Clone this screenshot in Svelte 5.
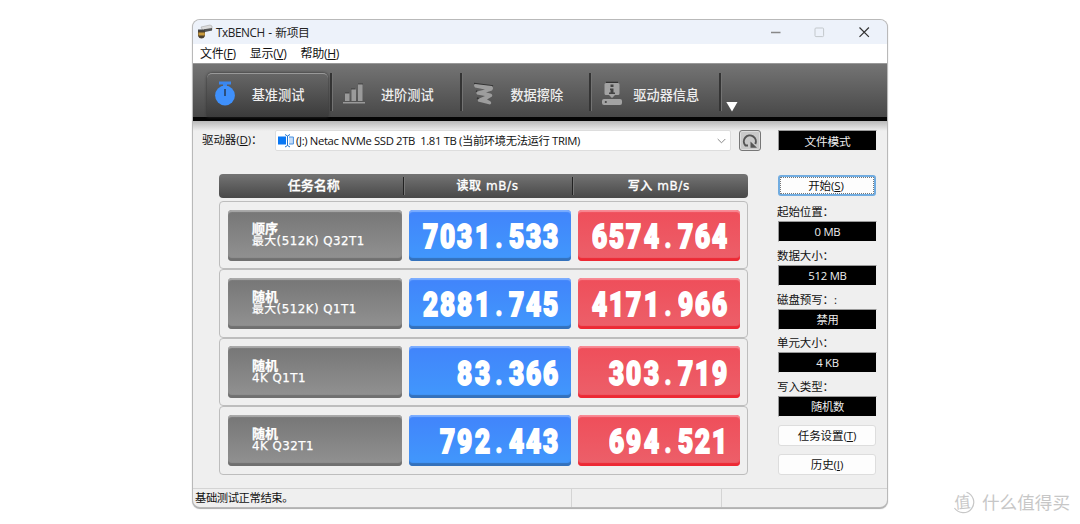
<script>
  const rows = [
    { title: '顺序', task: '最大(512K) Q32T1', read: '7031.533', write: '6574.764' },
    { title: '随机', task: '最大(512K) Q1T1', read: '2881.745', write: '4171.966' },
    { title: '随机', task: '4K Q1T1', read: '83.366', write: '303.719' },
    { title: '随机', task: '4K Q32T1', read: '792.443', write: '694.521' }
  ];
  const menus = [['文件', 'F'], ['显示', 'V'], ['帮助', 'H']];
  const fields = [
    ['起始位置：', '0 MB'],
    ['数据大小：', '512 MB'],
    ['磁盘预写：:', '禁用'],
    ['单元大小：', '4 KB'],
    ['写入类型：', '随机数']
  ];
</script>

{#snippet digits(value)}
  <div class="digits">{#each value.split('') as c}<span class:dot={c === '.'}><b>{c}</b></span>{/each}</div>
{/snippet}

<main>
  <section class="window">
    <header class="title">
      <svg class="app" width="16" height="16" viewBox="0 0 16 16">
        <path d="M4 3 L13 1 L15 2 L15 6 L6 7 Z" fill="#dcdcdc" stroke="#aaa" stroke-width=".6" />
        <path d="M7 5.2 L15 4 V6.6 L8 8Z" fill="#555" />
        <path d="M1 6 h7 v6 q-1 2.5 -3.5 2.5 T1 12Z" fill="#4b4030" />
        <path d="M1.4 8.4 h6.4 v3 h-6.4z" fill="#c99a3c" />
        <path d="M1 5.6h7v1.6H1z" fill="#444" />
      </svg>
      <span class="name">TxBENCH - 新项目</span>
      <svg class="controls" width="110" height="24" viewBox="0 0 110 24" fill="none">
        <path d="M6 12.500h9.500" stroke="#888" stroke-width="1.300" />
        <rect x="50" y="8" width="8.600" height="8.600" rx="1" stroke="#c3c8cc" />
        <path d="M94.500 7.500l9.400 9.400M103.900 7.500l-9.400 9.400" stroke="#333" stroke-width="1.200" />
      </svg>
    </header>
    <nav class="menu">
      {#each menus as [label, key]}<span>{label}(<u>{key}</u>)</span>{/each}
    </nav>
    <div class="toolbar">
      <div class="tab active">
        <svg width="22" height="26" viewBox="0 0 22 26">
          <path d="M5 .500h12V3.500H13v2H9v-2H5z" fill="#3a86ee" />
          <circle cx="11" cy="14.500" r="9.900" fill="#3f90fb" />
          <path d="M11 8v7" stroke="#28405f" stroke-width="1.600" />
        </svg>
        <span>基准测试</span>
      </div>
      <div class="tab">
        <svg width="22" height="26" viewBox="0 0 22 26">
          <path d="M2 12h4M8 8h4M15 3h5" stroke="#3c3c3c" stroke-width="1" />
          <path d="M2 12.500h4.500V20H2zM8.500 8.500H13V20H8.500zM15 3.500h4.500V20H15zM0 21h22v1.500H0z" fill="#9a9a9a" />
        </svg>
        <span>进阶测试</span>
      </div>
      <div class="tab">
        <svg width="22" height="26" viewBox="0 0 22 26">
          <path d="M1 2.500L20 5M3 10l5 2M4 17l5 2" stroke="#343434" stroke-width="1.600" />
          <path d="M2 3Q0 4 2 6.500L12 8.500L4 10.500Q2.500 12 4 13.500L12 15L6 17.500Q4 19 5 20.500L17 23.500Q19.500 22 17 20L14 18.500L19 15.500Q20 13.500 17.500 12.500L13 11.500L19 9.500Q21 7 19 5Z" fill="#9d9d9d" />
        </svg>
        <span>数据擦除</span>
      </div>
      <div class="tab">
        <svg width="22" height="26" viewBox="0 0 22 26">
          <path d="M4 1.500h12" stroke="#333" stroke-width="1.500" />
          <path d="M4 2h12q1.500 0 1.500 1.500v9q0 1.500-1.500 1.500h-3l-3 3-3-3H4q-1.500 0-1.500-1.500v-9Q2.500 2 4 2z" fill="#a3a3a3" />
          <path d="M8.500 3.500h3v2.500h-3zM8 7.500h3.500v4H13V13H7v-1.500h1.500V9H8z" fill="#444" />
          <rect x="0" y="18" width="20" height="6" rx="2" fill="#a3a3a3" />
          <circle cx="3.800" cy="21" r="1.100" fill="#444" />
        </svg>
        <span>驱动器信息</span>
      </div>
      <svg class="more" width="12" height="11" viewBox="0 0 12 11"><path d="M.3 1h11.200L6 10.500z" fill="#fff" /></svg>
    </div>
    <div class="drive">
      <span class="label">驱动器(<u>D</u>)：</span>
      <div class="select">
        <svg width="16" height="14" viewBox="0 0 16 14" fill="none">
          <path d="M0 2.500h8v8H0z" fill="#0877f4" />
          <path d="M11 3h4.400v7H11" fill="#c4dcf8" stroke="#4a91de" />
          <path d="M7 .5l2.500 1.500v9.500L7 13M12 .5L9.500 2M12 13l-2.500-1.500" stroke="#2374cd" />
        </svg>
        <span>(J:) Netac NVMe SSD 2TB&nbsp; 1.81 TB (当前环境无法运行 TRIM)</span>
        <svg class="chev" width="9" height="6" viewBox="0 0 9 6"><path d="M.7 1l3.800 3.800L8.300 1" fill="none" stroke="#888" /></svg>
      </div>
      <div class="refresh">
        <svg width="18" height="18" viewBox="0 0 18 18" fill="none">
          <path d="M7 13.600H4.500A6 6 0 1 1 14.300 12" stroke="#555" stroke-width="2" />
          <path d="M9.500 9.500v6.300H16z" fill="#555" />
        </svg>
      </div>
      <div class="black mode">文件模式</div>
    </div>
    <div class="content">
      <div class="table">
        <div class="thead"><span>任务名称</span><span>读取 mB/s</span><span>写入 mB/s</span></div>
        {#each rows as row}
          <div class="row">
            <div class="tile gray"><span>{row.title}</span><span>{row.task}</span></div>
            <div class="tile blue">{@render digits(row.read)}</div>
            <div class="tile red">{@render digits(row.write)}</div>
          </div>
        {/each}
      </div>
      <aside>
        <div class="btn start">开始(<u>S</u>)</div>
        {#each fields as [label, value]}
          <div class="field"><span>{label}</span><div class="black">{value}</div></div>
        {/each}
        <div class="btn first">任务设置(<u>T</u>)</div>
        <div class="btn">历史(<u>I</u>)</div>
      </aside>
    </div>
    <footer><span>基础测试正常结束。</span><span></span><span></span></footer>
  </section>
  <div class="mark">
    <svg width="23" height="23" viewBox="0 0 23 23"><path d="M14.500 1.200A10.500 10.500 0 1 1 2.500 17" fill="none" stroke="#c7c7c7" stroke-width="1.200" /><text x="2.500" y="17" font-size="16" transform="rotate(-5 11 11)">值</text></svg>
    <span>什么值得买</span>
  </div>
</main>

<style>
  :global(body) { background: #fff; overflow: hidden; }
  main { position: relative; box-sizing: border-box; width: 1080px; height: 524px; padding: 20px 0 0 193px; background: #fff; font-family: 'Open Sans', 'Noto Sans CJK SC', sans-serif; font-size: 11.500px; line-height: 14px; color: #111; white-space: nowrap; }
  .window { box-sizing: border-box; width: 694px; height: 487px; display: flex; flex-direction: column; background: #efefef; border-radius: 7px; overflow: hidden; box-shadow: 0 0 0 1px #b9b9b9, 0 1px 1px 1px #aaa; }
  u { text-underline-offset: 1px; text-decoration-thickness: 1px; }
  .title { height: 24px; flex: none; display: flex; align-items: center; background: #edf2fa; padding-left: 4px; }
  .app { margin-right: 3px; }
  .name { font-size: 11.800px; letter-spacing: -.45px; word-spacing: 1px; color: #222; }
  .controls { margin-left: auto; margin-right: 12px; }
  .menu { height: 19px; flex: none; display: flex; align-items: center; gap: 14px; padding-left: 7px; background: #fff; font-size: 12px; letter-spacing: -.3px; }
  .toolbar { box-sizing: border-box; height: 58px; flex: none; display: flex; align-items: flex-start; padding: 9px 0 0 14px; border-top: 1px solid #999; border-bottom: 4px solid #050505; background: linear-gradient(#747474, #484848); }
  .tab { box-sizing: border-box; width: 129.500px; height: 38px; display: flex; align-items: center; padding-left: 11px; padding-top: 4px; border-right: 2px solid #343434; color: #eee; font-size: 13.200px; font-weight: 500; box-shadow: 1px 0 #737373; }
  .tab svg { flex: none; }
  .tab span { flex: 1; text-align: center; padding: 1px 10px 0 0; }
  .active { position: relative; width: 125px; padding-left: 7px; }
  .active::before { content: ''; position: absolute; inset: 0 2px -6px 0; border-radius: 5px 5px 0 0; border-top: 1px solid #999; background: linear-gradient(#666, #3b3b3b); box-shadow: 0 0 3px #2d2d2d; }
  .active > * { position: relative; }
  .active span { padding-right: 10px; }
  .more { margin: 28px 0 0 5px; }
  .drive { height: 53px; flex: none; box-sizing: border-box; display: flex; align-items: flex-start; padding: 9px 0 0 9px; background: linear-gradient(#b8b8b8, #efefef 10px); }
  .label { width: 73px; padding-top: 3px; letter-spacing: -.1px; }
  .select { box-sizing: border-box; width: 456px; height: 21px; display: flex; align-items: center; padding: 0 4px 0 2px; background: #fff; border: 1px solid #ddd; border-radius: 2px; }
  .select span { margin-left: 2px; font-size: 11.300px; letter-spacing: -.36px; padding-top: 1px; }
  .chev { margin-left: auto; }
  .refresh { box-sizing: border-box; width: 22px; height: 21px; margin-left: 8px; display: grid; place-items: center; border: 1px solid #777; border-radius: 3px; background: #c9c9c9; box-shadow: inset 0 0 0 1px #ddd; }
  .black { box-sizing: border-box; width: 99px; height: 21px; display: grid; place-items: center; border: 1px solid #999; border-right-color: #eee; border-bottom-color: #eee; background: #000; color: #eee; font-size: 11.300px; letter-spacing: -.25px; padding-top: 1px; }
  .mode { margin-left: 17px; font-size: 11.700px; }
  .content { display: flex; padding-left: 26px; height: 314px; }
  .table { width: 529px; }
  .thead { height: 24px; margin-bottom: 3px; display: grid; grid-template-columns: 184.500px 169px 1fr; border-radius: 4px; background: linear-gradient(#747474, #484848); color: #fff; font-family: 'DejaVu Sans', 'Noto Sans CJK SC', sans-serif; font-weight: 500; font-size: 12px; letter-spacing: .6px; }
  .thead span { margin: 3px 0; display: flex; align-items: center; justify-content: center; border-right: 1px solid #222; box-shadow: 1px 0 #777; -webkit-text-stroke: .3px #fff; }
  .thead span:first-child { font-size: 13px; letter-spacing: 0; padding-left: 6px; }
  .thead span:last-child { border: 0; box-shadow: none; padding-right: 3px; }
  .row { box-sizing: border-box; height: 68.400px; display: flex; padding: 7.500px 0 0 8px; gap: 7px; border: 1px solid #bdbdbd; border-radius: 4px; }
  .tile { box-sizing: border-box; height: 51.500px; border-radius: 4px; width: 162px; display: flex; align-items: center; }
  .gray { width: 173.500px; padding: 0 0 1px 24px; flex-direction: column; align-items: flex-start; justify-content: center; color: #fff; font-family: 'DejaVu Sans', 'Noto Sans CJK SC', sans-serif; font-size: 11.800px; letter-spacing: .5px; line-height: 13px; background: linear-gradient(#767676, #929292); box-shadow: inset 0 2px 1px #aaa, inset 0 -3px 1px #707070; -webkit-text-stroke: .25px #fff; }
  .gray span:first-child { font-weight: 700; font-size: 13px; letter-spacing: 0; }
  .blue { background: linear-gradient(#4184fb, #4198fc); box-shadow: inset 0 2px 1px #7daeff, inset 0 -3px 1px #3471bb; }
  .red { background: linear-gradient(#ef4e5a, #ec606a); box-shadow: inset 0 2px 1px #f88b95, inset 0 -3px 1px #ed2934; }
  .digits { margin-left: auto; padding-right: 11.500px; display: flex; color: #fff; font-family: Roboto, sans-serif; font-size: 33px; line-height: 40px; padding-top: 3px; }
  .digits span { width: 17.100px; display: flex; justify-content: center; }
  .digits b { font-weight: 900; transform: scaleX(.79); -webkit-text-stroke: 1.800px #fff; }
  .digits .dot b { -webkit-text-stroke-width: .5px; }
  aside { padding: 1px 0 0 30px; width: 99px; }
  .btn { box-sizing: border-box; width: 98px; height: 21px; display: flex; align-items: center; justify-content: center; border: 1px solid #ddd; border-radius: 3px; background: #fdfdfd; letter-spacing: -.1px; margin-bottom: 8px; padding-top: 1px; }
  .start { padding-right: 2px; border: 2px solid #71ace0; margin-bottom: 6px; outline: 1px dotted #777; outline-offset: -3px; }
  .field { height: 43.800px; }
  .field > span { display: block; margin-left: -1px; height: 19px; line-height: 19px; letter-spacing: -.1px; }
  .first { margin-top: 4px; }
  footer { height: 18px; margin-top: auto; display: grid; grid-template-columns: 379px 150px 1fr; border-top: 1px solid #d4d4d4; }
  footer span { padding-left: 2px; line-height: 18px; font-size: 11.300px; border-right: 1px solid #d4d4d4; letter-spacing: -.4px; }
  footer span:last-child { border: 0; }
  .mark { position: absolute; left: 952px; top: 491px; display: flex; align-items: center; gap: 7px; color: #c7c7c7; font-size: 17.600px; line-height: 23px; }
  .mark text { fill: #c7c7c7; }
</style>
